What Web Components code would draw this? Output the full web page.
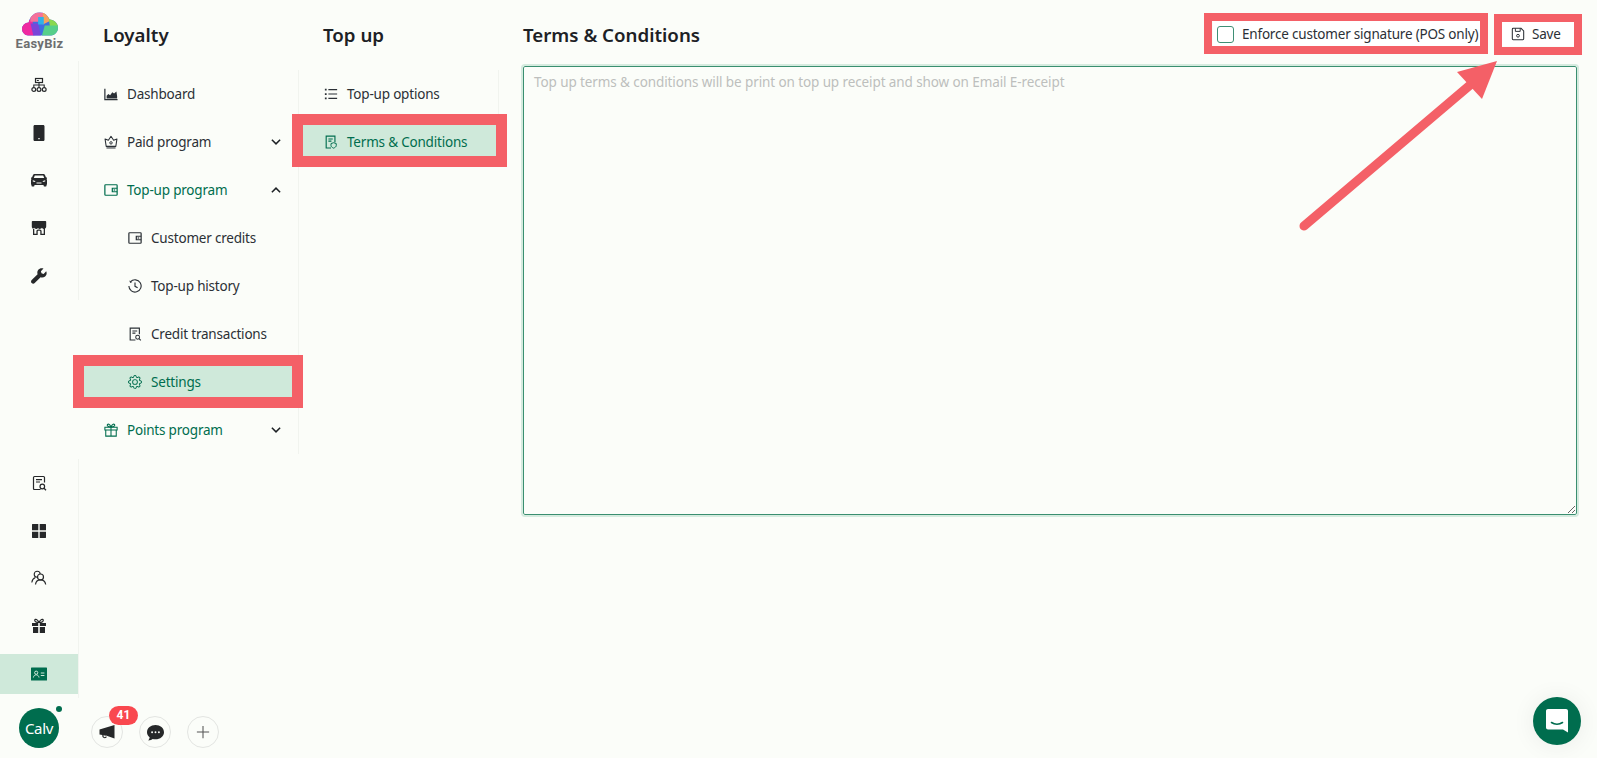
<!DOCTYPE html>
<html lang="en">
<head>
<meta charset="utf-8">
<title>Loyalty - Terms & Conditions</title>
<style>
  html, body { margin: 0; height: 100%; background: #fff; overflow: hidden; }
  body { font-family: "Noto Sans", "Open Sans", sans-serif; color: #2b3036; }
</style>
</head>
<body>
<eb-app>
  <eb-rail slot="rail"></eb-rail>

  <eb-column slot="nav" heading="Loyalty" style="--item-left:5px;--item-right:5px;--item-pad:20px">
    <eb-item icon="chart">Dashboard</eb-item>
    <eb-item icon="crown" chevron="down">Paid program</eb-item>
    <eb-item icon="wallet" chevron="up" tone="green">Top-up program</eb-item>
    <eb-item icon="wallet" sub>Customer credits</eb-item>
    <eb-item icon="history" sub>Top-up history</eb-item>
    <eb-item icon="receipt" sub>Credit transactions</eb-item>
    <eb-item icon="gear" sub active>Settings</eb-item>
    <eb-item icon="gift" chevron="down" tone="green">Points program</eb-item>
  </eb-column>

  <eb-column slot="subnav" heading="Top up" style="--item-left:4px;--item-right:1px;--item-pad:21px">
    <eb-item icon="list">Top-up options</eb-item>
    <eb-item icon="terms" active>Terms &amp; Conditions</eb-item>
  </eb-column>

  <eb-terms slot="main"></eb-terms>
  <eb-footer slot="footer"></eb-footer>
</eb-app>

<script>
// 16x16 icons, shared by every element that draws one
const ICONS = {
  diagram: '<rect x="4.5" y="1.5" width="7" height="4" fill="none" stroke="currentColor" stroke-width="1.2"/><rect x="5.8" y="3" width="2" height="1" fill="currentColor"/><path d="M8 5.5V8M2.8 10.5V8h10.4v2.5M8 8v2.5" fill="none" stroke="currentColor" stroke-width="1.1"/><circle cx="2.8" cy="12.5" r="1.9" fill="none" stroke="currentColor" stroke-width="1.2"/><circle cx="8" cy="12.5" r="1.9" fill="none" stroke="currentColor" stroke-width="1.2"/><circle cx="13.2" cy="12.5" r="1.9" fill="none" stroke="currentColor" stroke-width="1.2"/>',
  phone: '<path fill-rule="evenodd" fill="currentColor" d="M3.8 0h8.4c.7 0 1.3.6 1.3 1.3v13.4c0 .7-.6 1.3-1.3 1.3H3.8c-.7 0-1.3-.6-1.3-1.3V1.3C2.5.6 3.1 0 3.8 0zM7.3 13h1.4v1.2H7.3z"/>',
  car: '<path fill-rule="evenodd" fill="currentColor" d="M3.7 2h8.600c.8 0 1.500.5 1.800 1.200l.9 2.300h1v1.300h-.7c.4.400.7.900.7 1.500V12c0 .4-.2.700-.5.900v1.100c0 .3-.3.500-.6.500h-1.700c-.3 0-.6-.2-.6-.5V13H3.400v1c0 .3-.3.500-.6.500H1.100c-.3 0-.6-.2-.6-.5v-1.100C.2 12.700 0 12.400 0 12V8.300c0-.6.300-1.100.7-1.500H0V5.500h1l.9-2.300C2.200 2.500 2.900 2 3.700 2zM3.800 3.400 2.800 6h10.400l-1-2.600zM1.800 8.200v1.300l2.400.6V9zm12.400 0L11.800 9v1.100l2.400-.6zM5.500 10.500v1h5v-1z"/>',
  store: '<path fill-rule="evenodd" fill="currentColor" d="M1.500 1h13c.4 0 .7.300.7.700V6.500c0 1-.5 1.700-1.200 2V15h-4.700v-3.800c0-.3-.2-.5-.5-.5H7.200c-.3 0-.5.200-.5.500V15H2V8.500C1.300 8.200.8 7.500.8 6.500V1.700c0-.4.300-.7.700-.7zM3.300 8.900v4.800h2.100v-2.500c0-1 .8-1.800 1.800-1.800h1.600c1 0 1.800.8 1.800 1.800v2.500h2.100V8.900c-1-.1-1.500-.6-1.800-1.100-.4.600-1.100 1.100-2.100 1.100-.8 0-1.400-.4-1.800-1-.4.600-1 1-1.800 1-1 0-1.700-.5-2.100-1.100-.3.500-.8 1-1.800 1.100z"/>',
  wrench: '<path fill="currentColor" d="M15.200 3.300 12.600 5.900 10.500 5.300 9.900 3.200 12.500.6C10.600-.2 8.400.3 7.300 1.800 6.300 3 6 4.700 6.600 6.200L.7 12.100c-.9.900-.9 2.200 0 3 .9.900 2.200.900 3 0l5.900-5.900c1.500.6 3.200.3 4.500-.8 1.500-1.300 2-3.300 1.100-5.100z"/>',
  report: '<path d="M9.500 14.500H3.500c-.6 0-1-.4-1-1V2.500c0-.6.400-1 1-1h9c.6 0 1 .4 1 1v5" fill="none" stroke="currentColor" stroke-width="1.2"/><path d="M5 4.700h6M5 7h4" stroke="currentColor" stroke-width="1.2"/><circle cx="11.300" cy="11.500" r="2.300" fill="none" stroke="currentColor" stroke-width="1.2"/><path d="m13 13.200 2 2" stroke="currentColor" stroke-width="1.3"/>',
  grid: '<path fill="currentColor" d="M1 1.500C1 1.200 1.200 1 1.500 1h5.800v6.300H1zM8.700 1h5.800c.3 0 .5.200.5.500v5.800H8.700zM1 8.700h6.300V15H1.500c-.3 0-.5-.2-.5-.5zM8.700 8.700H15v5.800c0 .3-.2.500-.5.500H8.700z"/>',
  people: '<circle cx="6.200" cy="4.300" r="3" fill="none" stroke="currentColor" stroke-width="1.1"/><path d="M.8 12.500c.3-2.500 1.700-4.300 3.600-5" fill="none" stroke="currentColor" stroke-width="1.1"/><circle cx="9.500" cy="7" r="3" fill="#fbfdf9" stroke="currentColor" stroke-width="1.2"/><path d="M4.500 14.500c.3-2.800 2.500-4.600 5-4.600s4.700 1.800 5.200 4.600" fill="none" stroke="currentColor" stroke-width="1.2"/>',
  giftFill: '<path fill="currentColor" d="M1 5h6.200v3H1zM8.800 5H15v3H8.800zM2 9h5.200v6H2zM8.800 9H14v6H8.800z"/><path d="M8 4.500C6.500 1 4.300.7 3.800 2c-.5 1.300 1 2.500 4.200 2.500zm0 0c1.500-3.500 3.700-3.800 4.200-2.500.5 1.300-1 2.500-4.200 2.500z" fill="none" stroke="currentColor" stroke-width="1.2"/>',
  card: '<rect x="0" y="1.500" width="16" height="13" rx=".6" fill="currentColor"/><circle cx="5.200" cy="6.700" r="1.600" fill="none" stroke="#cfe9da" stroke-width="1"/><path d="M2.400 11.500c.3-1.800 1.400-2.700 2.800-2.700s2.500.9 2.800 2.700" fill="none" stroke="#cfe9da" stroke-width="1"/><path d="M9.800 7h3.600M9.800 9.500h3.600" stroke="#cfe9da" stroke-width="1"/>',
  chart: '<path fill="currentColor" d="M3 13h12v-2.500l-.8-5.500-2.700 2.500L9.500 6 7 9.500 5 8l-2 2z"/><path d="M1 2v12.500h14.500" fill="none" stroke="currentColor" stroke-width="1.4"/>',
  crown: '<path d="M8 1.500 11 6l3.800-1.500-1.300 8.500H2.500L1.200 4.500 5 6z" fill="none" stroke="currentColor" stroke-width="1.2" stroke-linejoin="round"/><path d="M2.800 14.800h10.400" stroke="currentColor" stroke-width="1.2"/><circle cx="8" cy="9" r="1.400" fill="none" stroke="currentColor" stroke-width="1.1"/>',
  wallet: '<rect x="1" y="2" width="14" height="12" rx=".8" fill="none" stroke="currentColor" stroke-width="1.4"/><path d="M15 6H9.500v4H15" fill="none" stroke="currentColor" stroke-width="1.4"/><rect x="11" y="7.300" width="1.800" height="1.400" fill="currentColor"/>',
  history: '<path d="M2.900 3.100A7 7 0 1 1 1 8" fill="none" stroke="currentColor" stroke-width="1.3"/><path d="M8 4v4.400l3 1.700" fill="none" stroke="currentColor" stroke-width="1.3"/><path d="M1.500 1.800 2.500 4.500 5 3.300z" fill="currentColor"/>',
  receipt: '<path d="M8.500 14.800H2.500V1.300h10.500v7" fill="none" stroke="currentColor" stroke-width="1.3"/><path d="M5 4.500h5.500M5 7h3.500" stroke="currentColor" stroke-width="1.2"/><circle cx="11" cy="11.700" r="2.200" fill="none" stroke="currentColor" stroke-width="1.2"/><path d="m12.600 13.300 2 2" stroke="currentColor" stroke-width="1.3"/>',
  gear: '<path fill="currentColor" d="M8 4.754a3.246 3.246 0 1 0 0 6.492 3.246 3.246 0 0 0 0-6.492zM5.754 8a2.246 2.246 0 1 1 4.492 0 2.246 2.246 0 0 1-4.492 0z"/><path fill="currentColor" d="M9.796 1.343c-.527-1.790-3.065-1.790-3.592 0l-.094.319a.873.873 0 0 1-1.255.52l-.292-.16c-1.640-.892-3.433.902-2.540 2.541l.159.292a.873.873 0 0 1-.52 1.255l-.319.094c-1.790.527-1.790 3.065 0 3.592l.319.094a.873.873 0 0 1 .52 1.255l-.16.292c-.892 1.640.901 3.434 2.541 2.540l.292-.159a.873.873 0 0 1 1.255.52l.094.319c.527 1.790 3.065 1.790 3.592 0l.094-.319a.873.873 0 0 1 1.255-.52l.292.16c1.640.893 3.434-.902 2.540-2.541l-.159-.292a.873.873 0 0 1 .52-1.255l.319-.094c1.790-.527 1.790-3.065 0-3.592l-.319-.094a.873.873 0 0 1-.52-1.255l.16-.292c.893-1.640-.902-3.433-2.541-2.540l-.292.159a.873.873 0 0 1-1.255-.52l-.094-.319zm-2.633.283c.246-.835 1.428-.835 1.674 0l.094.319a1.873 1.873 0 0 0 2.693 1.115l.291-.16c.764-.415 1.600.42 1.184 1.185l-.159.292a1.873 1.873 0 0 0 1.116 2.692l.318.094c.835.246.835 1.428 0 1.674l-.319.094a1.873 1.873 0 0 0-1.115 2.693l.16.291c.415.764-.42 1.600-1.185 1.184l-.291-.159a1.873 1.873 0 0 0-2.693 1.116l-.094.318c-.246.835-1.428.835-1.674 0l-.094-.319a1.873 1.873 0 0 0-2.692-1.115l-.292.16c-.764.415-1.600-.42-1.184-1.185l.159-.291A1.873 1.873 0 0 0 1.945 8.930l-.319-.094c-.835-.246-.835-1.428 0-1.674l.319-.094A1.873 1.873 0 0 0 3.060 4.377l-.16-.292c-.415-.764.42-1.600 1.185-1.184l.292.159a1.873 1.873 0 0 0 2.692-1.115l.094-.319z"/>',
  gift: '<path d="M1 4.800h14v3.200H1zM2 8h12v7H2zM8 4.800V15" fill="none" stroke="currentColor" stroke-width="1.2"/><path d="M8 4.500C6.500 1 4.300.7 3.800 2c-.5 1.300 1 2.500 4.200 2.500zm0 0c1.500-3.500 3.700-3.800 4.200-2.500.5 1.300-1 2.500-4.200 2.500z" fill="none" stroke="currentColor" stroke-width="1.2"/>',
  list: '<path d="M5 3h10M5 8h10M5 13h10" stroke="currentColor" stroke-width="1.3"/><path d="M1 2h2v2H1zM1 7h2v2H1zM1 12h2v2H1z" fill="currentColor"/>',
  terms: '<path d="M8 14.800H2.500V1.300h10v7" fill="none" stroke="currentColor" stroke-width="1.3"/><path d="M5 4.500h5M5 7h3.500" stroke="currentColor" stroke-width="1.2"/><path d="M11 8.800l3 1v2.200c0 1.400-1.300 2.300-3 3-1.700-.7-3-1.600-3-3V9.800z" fill="none" stroke="currentColor" stroke-width="1.1"/>',
  save: '<path d="M2.500 1.500h9l3 3v9c0 .6-.4 1-1 1h-11c-.6 0-1-.4-1-1v-11c0-.6.400-1 1-1z" fill="none" stroke="currentColor" stroke-width="1.2"/><path d="M5 1.500v3.500h5.500V1.500" fill="none" stroke="currentColor" stroke-width="1.1"/><circle cx="8" cy="10" r="1.600" fill="none" stroke="currentColor" stroke-width="1.1"/>',
  down: '<path d="m2.500 5 5.500 5.500L13.500 5" fill="none" stroke="currentColor" stroke-width="2"/>',
  up: '<path d="M2.500 11 8 5.500l5.500 5.500" fill="none" stroke="currentColor" stroke-width="2"/>',
  megaphone: '<path fill="currentColor" d="M15.500 1v13.500L7 11.500v.3L4.500 11.300v.7c0 1.300 1.800 1.600 2.200.4l1.300.4C7.200 15 3.300 14.300 3.300 12v-1L.5 10.400V5.500z"/>',
  bubble: '<path fill="currentColor" d="M8 1c4.400 0 8 2.900 8 6.700s-3.600 6.700-8 6.700c-.9 0-1.800-.1-2.700-.4-.7.600-2.200 1.300-4.100 1.500.7-.9 1.200-2 1.300-3.100C.9 11.200 0 9.500 0 7.700 0 3.900 3.600 1 8 1z"/><circle cx="4.800" cy="7.800" r=".9" fill="#fbfdf9"/><circle cx="8" cy="7.800" r=".9" fill="#fbfdf9"/><circle cx="11.200" cy="7.800" r=".9" fill="#fbfdf9"/>',
  plus: '<path d="M8 1v14M1 8h14" stroke="currentColor" stroke-width="1.2"/>'
};

class EbIcon extends HTMLElement {
  connectedCallback() {
    const size = this.getAttribute('size') || 14;
    this.attachShadow({ mode: 'open' }).innerHTML = `
      <style>
        :host { display: inline-flex; flex: none; width: ${size}px; height: ${size}px; }
        svg { display: block; width: 100%; height: 100%; }
      </style>
      <svg viewBox="0 0 16 16" aria-hidden="true">${ICONS[this.getAttribute('name')] || ''}</svg>`;
  }
}

class EbApp extends HTMLElement {
  constructor() {
    super();
    this.attachShadow({ mode: 'open' }).innerHTML = `
      <style>
        :host {
          display: grid;
          position: relative;
          width: 1597px;
          height: 758px;
          overflow: hidden;
          background: #fbfdf9;
          grid-template-columns: 79px 220px 200px 1fr;
          grid-template-rows: 700px 58px;
        }
        ::slotted([slot="rail"]) { grid-column: 1; grid-row: 1; }
        ::slotted([slot="nav"]) { grid-column: 2; grid-row: 1; }
        ::slotted([slot="subnav"]) { grid-column: 3; grid-row: 1; }
        ::slotted([slot="main"]) { grid-column: 4; grid-row: 1 / 3; }
        ::slotted([slot="footer"]) { grid-column: 1 / 4; grid-row: 2; }
        svg.arrow { position: absolute; left: 0; top: 0; pointer-events: none; }
      </style>
      <slot name="rail"></slot>
      <slot name="nav"></slot>
      <slot name="subnav"></slot>
      <slot name="main"></slot>
      <slot name="footer"></slot>
      <eb-marker style="left:73px;top:355px;width:230px;height:53px;--w:11px"></eb-marker>
      <eb-marker style="left:292px;top:114px;width:215px;height:53px;--w:11px"></eb-marker>
      <eb-marker style="left:1204px;top:13px;width:284px;height:41px;--w:8.5px"></eb-marker>
      <eb-marker style="left:1494px;top:14px;width:88px;height:41px;--w:8.5px"></eb-marker>
      <svg class="arrow" width="1597" height="758">
        <path d="M1304 226 1476 80" stroke="#f46067" stroke-width="9" stroke-linecap="round" fill="none"/>
        <path d="M1497 61 1457 72 1482 99z" fill="#f46067"/>
      </svg>
      <eb-chat></eb-chat>`;
  }
}

// red annotation rectangle that was drawn over the screenshot
class EbMarker extends HTMLElement {
  constructor() {
    super();
    this.attachShadow({ mode: 'open' }).innerHTML = `
      <style>
        :host {
          position: absolute;
          box-sizing: border-box;
          border: var(--w, 8px) solid #f46067;
          pointer-events: none;
        }
      </style>`;
  }
}

class EbRail extends HTMLElement {
  constructor() {
    super();
    const top = ['diagram', 'phone', 'car', 'store', 'wrench'];
    const bottom = ['report', 'grid', 'people', 'giftFill'];
    const cell = n => `<div class="cell"><eb-icon name="${n}" size="16"></eb-icon></div>`;
    this.attachShadow({ mode: 'open' }).innerHTML = `
      <style>
        :host { display: flex; flex-direction: column; }
        .logo { height: 61px; display: flex; flex-direction: column; align-items: center; padding-top: 12px; box-sizing: border-box; }
        .logo span { font: 700 13px/12px Roboto, sans-serif; color: #6d6f70; letter-spacing: .3px; margin-top: 1.5px; }
        .group { border-right: 1.5px solid #f1f4ef; box-sizing: border-box; }
        .spacer { flex: 1; }
        .cell { height: 47.8px; display: flex; align-items: center; justify-content: center; color: #26282a; }
        .active { height: 40px; margin: 4px 0; background: #cfe9da; color: #006d4e; display: flex; align-items: center; justify-content: center; }
        .bottom { margin-bottom: 2px; }
      </style>
      <div class="logo">
        <svg width="36" height="24" viewBox="0 0 38 25">
          <defs><clipPath id="cloud"><path d="M8 25C3.500 25 0 21.800 0 17.800c0-3.800 3.200-6.800 7-7C8.500 4.500 13 0 18.500 0c4.800 0 9 3.200 10.500 7.800 5 .3 9 4 9 8.700 0 4.800-4 8.500-9 8.500z"/></clipPath></defs>
          <g clip-path="url(#cloud)">
            <rect width="38" height="25" fill="#3f6fe0"/>
            <path d="M0 8h11l2 17H0z" fill="#ef2aa0"/>
            <path d="M8 0h16l-4 10H9z" fill="#f4719a"/>
            <path d="M22 0h8v9l-8 4z" fill="#f5a35c"/>
            <path d="M28 6h10v10l-8 2z" fill="#8ad84f"/>
            <path d="M24 14h14v11H21z" fill="#56cf8a"/>
            <path d="M9 12h8l3 13H12z" fill="#7a45d8"/>
            <path d="M17 5h6v8h-6z" fill="#2fb2e8"/>
          </g>
        </svg>
        <span>EasyBiz</span>
      </div>
      <div class="group">${top.map(cell).join('')}</div>
      <div class="spacer"></div>
      <div class="group bottom">${bottom.map(cell).join('')}
        <div class="active"><eb-icon name="card" size="16"></eb-icon></div>
      </div>`;
  }
}

class EbColumn extends HTMLElement {
  connectedCallback() {
    this.attachShadow({ mode: 'open' }).innerHTML = `
      <style>
        :host { display: flex; flex-direction: column; min-width: 0; }
        h2 {
          margin: 0;
          height: 70px;
          box-sizing: border-box;
          padding: 20px 0 0 24px;
          font: 600 18.7px/30px "Noto Sans", sans-serif;
          color: #1d2125;
        }
        .list { border-right: 1.5px solid #f1f4ef; }
      </style>
      <h2>${this.getAttribute('heading')}</h2>
      <div class="list"><slot></slot></div>`;
  }
}

class EbItem extends HTMLElement {
  connectedCallback() {
    const sub = this.hasAttribute('sub');
    const active = this.hasAttribute('active');
    const green = active || this.getAttribute('tone') === 'green';
    const chevron = this.getAttribute('chevron');
    this.attachShadow({ mode: 'open' }).innerHTML = `
      <style>
        :host {
          display: flex;
          align-items: center;
          box-sizing: border-box;
          height: 48px;
          padding: 4px var(--item-right, 5px) 4px var(--item-left, 5px);
          font: 400 13.5px/20px "Noto Sans", sans-serif;
          letter-spacing: -.2px;
          color: ${green ? '#006d4e' : '#2b3036'};
        }
        .row {
          flex: 1;
          display: flex;
          align-items: center;
          height: 40px;
          padding-left: ${sub ? '44px' : 'var(--item-pad, 20px)'};
          padding-right: 11px;
          background: ${active ? '#cfe9da' : 'transparent'};
        }
        .label { margin-left: 9px; flex: 1; white-space: nowrap; }
        .chev { color: #1d2125; }
      </style>
      <div class="row">
        <eb-icon name="${this.getAttribute('icon')}" size="14"></eb-icon>
        <span class="label"><slot></slot></span>
        ${chevron ? `<eb-icon class="chev" name="${chevron}" size="12"></eb-icon>` : ''}
      </div>`;
  }
}

class EbTerms extends HTMLElement {
  constructor() {
    super();
    this.attachShadow({ mode: 'open' }).innerHTML = `
      <style>
        :host { display: flex; flex-direction: column; padding: 0 20px 0 24px; min-width: 0; }
        header { display: flex; align-items: center; height: 66px; box-sizing: border-box; }
        h2 { margin: 4px 0 0; flex: 1; font: 600 18.7px/30px "Noto Sans", sans-serif; color: #1d2125; }
        .check {
          display: flex; align-items: center; height: 25px; background: #fff;
          padding: 2px 1px 0 4px; width: 267px; box-sizing: border-box;
          font: 400 13.5px/20px "Noto Sans", sans-serif; letter-spacing: -.2px; color: #2b3036; white-space: nowrap;
        }
        .box { width: 15px; height: 15px; border: 1px solid #3f8f75; border-radius: 3px; margin-right: 8px; flex: none; }
        .save {
          display: flex; align-items: center; height: 25px; width: 72px; box-sizing: border-box; margin: 0 3px 0 22px;
          background: #fff; padding: 2px 0 0 9px;
          font: 400 13.5px/20px "Noto Sans", sans-serif; letter-spacing: -.2px; color: #2b3036;
        }
        .save span { margin-left: 7px; }
        textarea {
          display: block; width: 100%; height: 449px; box-sizing: border-box; margin: 0;
          border: 1px solid #3a8f70; border-radius: 2px; outline: 2px solid #d5ebdf; outline-offset: 0;
          background: #fbfdf9; padding: 5px 10px;
          font: 400 13.5px/20px "Noto Sans", sans-serif; letter-spacing: -.1px;
        }
        textarea::placeholder { color: #bdbfbd; opacity: 1; }
      </style>
      <header>
        <h2>Terms &amp; Conditions</h2>
        <label class="check"><span class="box"></span>Enforce customer signature (POS only)</label>
        <div class="save"><eb-icon name="save" size="14"></eb-icon><span>Save</span></div>
      </header>
      <textarea placeholder="Top up terms &amp; conditions will be print on top up receipt and show on Email E-receipt"></textarea>`;
  }
}

class EbFooter extends HTMLElement {
  constructor() {
    super();
    this.attachShadow({ mode: 'open' }).innerHTML = `
      <style>
        :host { display: flex; align-items: flex-start; padding: 8px 0 0 19px; box-sizing: border-box; }
        .avatar {
          position: relative; width: 40px; height: 40px; border-radius: 50%; background: #006d4e; color: #fff;
          font: 400 15px/40px "Noto Sans", sans-serif; text-align: center; margin-right: 32px; letter-spacing: -.3px;
        }
        .avatar i { position: absolute; right: -3px; top: -2px; width: 6px; height: 6px; border-radius: 50%; background: #006d4e; }
        .round {
          position: relative; width: 32px; height: 32px; box-sizing: border-box; border: 1px solid #e3e5e2; border-radius: 50%;
          display: flex; align-items: center; justify-content: center; margin: 8px 16px 0 0; color: #262829;
        }
        .badge {
          position: absolute; left: 17px; top: -11px; width: 29px; height: 19px; border-radius: 10px; background: #f9484f; color: #fff;
          font: 700 12px/19px Roboto, sans-serif; text-align: center;
        }
      </style>
      <div class="avatar">Calv<i></i></div>
      <div class="round"><eb-icon name="megaphone" size="16"></eb-icon><span class="badge">41</span></div>
      <div class="round"><eb-icon name="bubble" size="17"></eb-icon></div>
      <div class="round" style="color:#555"><eb-icon name="plus" size="14"></eb-icon></div>`;
  }
}

// floating support bubble in the corner
class EbChat extends HTMLElement {
  constructor() {
    super();
    this.attachShadow({ mode: 'open' }).innerHTML = `
      <style>
        :host {
          position: absolute; left: 1533px; top: 697px; width: 48px; height: 48px; border-radius: 50%;
          background: #006d4e; box-shadow: 0 1px 24px rgba(0,0,0,.07);
          display: flex; align-items: center; justify-content: center;
        }
      </style>
      <svg width="24" height="26" viewBox="0 0 24 26">
        <path fill="#fff" d="M3 1h18c1.100 0 2 .9 2 2v21.500L18 21.500H3c-1.100 0-2-.9-2-2V3c0-1.100.9-2 2-2z"/>
        <path d="M6.500 14.500c3.200 2.200 7.800 2.200 11 0" fill="none" stroke="#006d4e" stroke-width="1.600" stroke-linecap="round"/>
      </svg>`;
  }
}

customElements.define('eb-icon', EbIcon);
customElements.define('eb-marker', EbMarker);
customElements.define('eb-item', EbItem);
customElements.define('eb-column', EbColumn);
customElements.define('eb-rail', EbRail);
customElements.define('eb-terms', EbTerms);
customElements.define('eb-footer', EbFooter);
customElements.define('eb-chat', EbChat);
customElements.define('eb-app', EbApp);
</script>
</body>
</html>
